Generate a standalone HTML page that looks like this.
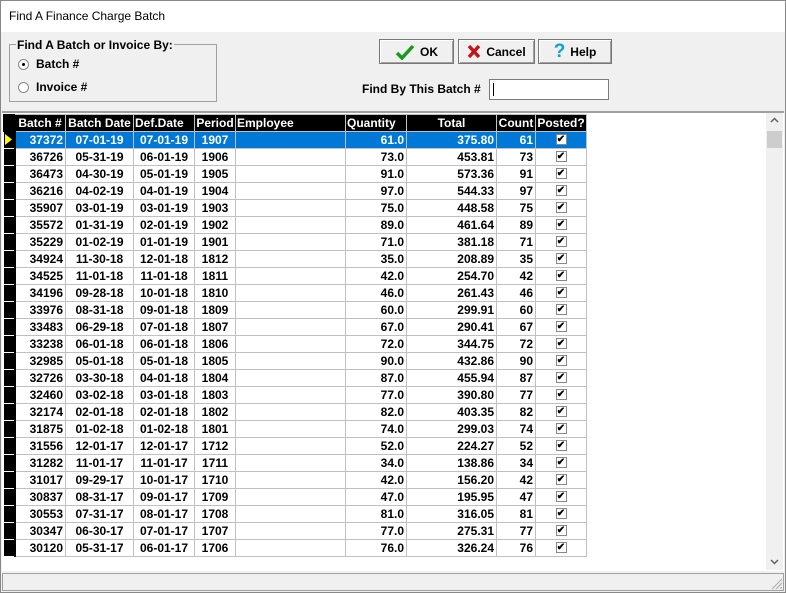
<!DOCTYPE html>
<html><head><meta charset="utf-8"><style>
*{margin:0;padding:0;box-sizing:border-box}
body{width:786px;height:593px;position:relative;overflow:hidden;background:#f0f0f0;font-family:"Liberation Sans",Arial,sans-serif;font-size:12px;font-weight:bold;color:#000}
.abs{position:absolute}
#title{left:0;top:0;width:786px;height:32px;background:#fff;font-weight:normal;font-size:12px;padding:9px 0 0 9px}
#frame{left:0;top:0;width:786px;height:593px;border:1px solid #888;pointer-events:none}
.grp{left:9px;top:44px;width:208px;height:58px;border:1px solid #a0a0a0}
.btn{top:39px;height:25px;border:1px solid #777;background:#f0f0f0;box-shadow:inset 1px 1px 0 #fff,inset -1px -1px 0 #a0a0a0;display:flex;align-items:center;justify-content:center;gap:5px}
.radio{width:11px;height:11px;border-radius:50%;border:1px solid #888;background:#fff;display:inline-block}
#grid{left:2px;top:111px;width:782px;height:460px;background:#fff;border-top:2px solid #a0a0a0}
table{position:absolute;left:1px;top:1px;border-collapse:collapse;table-layout:fixed;width:583px}
td{height:17px;border:1px solid #c0c0c0;padding:0 2px;white-space:nowrap;overflow:hidden;line-height:15px}
th{height:17px;background:#000;color:#fff;border:1px solid #c0c0c0;border-bottom:none;padding:0 1px;white-space:nowrap;overflow:hidden;font-weight:bold;line-height:15px}
td.i{background:#000;border:none;border-bottom:1px solid #fff;border-right:2px solid #000;padding:0 1px}
.r{text-align:right}.c{text-align:center}
tr.sel td{background:#0078d7;color:#fff}
tr.sel td.i{background:#000}
.cb{display:inline-block;width:11px;height:11px;border:1px solid #888;background:#fff;vertical-align:middle;position:relative;top:-1px;font-size:10px;line-height:9px;color:#000;text-align:center}
#sb{left:766px;top:113px;width:17px;height:457px;background:#f0f0f0}
#status{left:2px;top:573px;width:782px;height:18px;border:1px solid #a0a0a0;background:#f0f0f0}
</style></head><body>
<div id="title" class="abs">Find A Finance Charge Batch</div>
<div class="abs grp"></div>
<div class="abs" style="left:16px;top:38px;background:#f0f0f0;padding:0 1px">Find A Batch or Invoice By:</div>
<div class="abs" style="left:18px;top:57px;display:flex;align-items:center;gap:7px"><span class="radio" style="position:relative"><span style="position:absolute;left:3px;top:3px;width:3px;height:3px;background:#000;border-radius:50%"></span></span>Batch #</div>
<div class="abs" style="left:18px;top:80px;display:flex;align-items:center;gap:7px"><span class="radio"></span>Invoice #</div>
<div class="abs btn" style="left:379px;width:75px"><svg width="20" height="16" viewBox="0 0 20 16"><path d="M2 9 L7 14 L18 2" stroke="#1a9a1a" stroke-width="3.5" fill="none"/></svg>OK</div>
<div class="abs btn" style="left:458px;width:77px"><svg width="14" height="15" viewBox="0 0 14 15"><path d="M2 2 L12 13 M12 2 L2 13" stroke="#c01818" stroke-width="3.5"/></svg>Cancel</div>
<div class="abs btn" style="left:538px;width:74px"><span style="color:#0fa0d0;font-size:19px;font-weight:bold;line-height:16px">?</span>Help</div>
<div class="abs" style="left:362px;top:82px">Find By This Batch #</div>
<div class="abs" style="left:489px;top:79px;width:120px;height:21px;background:#fff;border:1px solid #7a7a7a"><div style="position:absolute;left:3px;top:3px;width:1px;height:13px;background:#000"></div></div>
<div id="grid" class="abs">
<table>
<colgroup><col style="width:11px"><col style="width:51px"><col style="width:68px"><col style="width:61px"><col style="width:41px"><col style="width:110px"><col style="width:61px"><col style="width:90px"><col style="width:39px"><col style="width:51px"></colgroup>
<tr><th style="background:#000;border-color:#000"></th><th>Batch #</th><th>Batch Date</th><th style="text-align:left">Def.Date</th><th>Period</th><th style="text-align:left">Employee</th><th style="text-align:left">Quantity</th><th>Total</th><th>Count</th><th>Posted?</th></tr>
<tr class="sel"><td class="i"><svg width="7" height="11" style="display:block"><path d="M0 0 L7 5.5 L0 11Z" fill="#ff0"/></svg></td><td class="r">37372</td><td class="c">07-01-19</td><td class="c">07-01-19</td><td class="c">1907</td><td></td><td class="r">61.0</td><td class="r">375.80</td><td class="r">61</td><td class="c"><span class="cb">✔</span></td></tr>
<tr><td class="i"></td><td class="r">36726</td><td class="c">05-31-19</td><td class="c">06-01-19</td><td class="c">1906</td><td></td><td class="r">73.0</td><td class="r">453.81</td><td class="r">73</td><td class="c"><span class="cb">✔</span></td></tr>
<tr><td class="i"></td><td class="r">36473</td><td class="c">04-30-19</td><td class="c">05-01-19</td><td class="c">1905</td><td></td><td class="r">91.0</td><td class="r">573.36</td><td class="r">91</td><td class="c"><span class="cb">✔</span></td></tr>
<tr><td class="i"></td><td class="r">36216</td><td class="c">04-02-19</td><td class="c">04-01-19</td><td class="c">1904</td><td></td><td class="r">97.0</td><td class="r">544.33</td><td class="r">97</td><td class="c"><span class="cb">✔</span></td></tr>
<tr><td class="i"></td><td class="r">35907</td><td class="c">03-01-19</td><td class="c">03-01-19</td><td class="c">1903</td><td></td><td class="r">75.0</td><td class="r">448.58</td><td class="r">75</td><td class="c"><span class="cb">✔</span></td></tr>
<tr><td class="i"></td><td class="r">35572</td><td class="c">01-31-19</td><td class="c">02-01-19</td><td class="c">1902</td><td></td><td class="r">89.0</td><td class="r">461.64</td><td class="r">89</td><td class="c"><span class="cb">✔</span></td></tr>
<tr><td class="i"></td><td class="r">35229</td><td class="c">01-02-19</td><td class="c">01-01-19</td><td class="c">1901</td><td></td><td class="r">71.0</td><td class="r">381.18</td><td class="r">71</td><td class="c"><span class="cb">✔</span></td></tr>
<tr><td class="i"></td><td class="r">34924</td><td class="c">11-30-18</td><td class="c">12-01-18</td><td class="c">1812</td><td></td><td class="r">35.0</td><td class="r">208.89</td><td class="r">35</td><td class="c"><span class="cb">✔</span></td></tr>
<tr><td class="i"></td><td class="r">34525</td><td class="c">11-01-18</td><td class="c">11-01-18</td><td class="c">1811</td><td></td><td class="r">42.0</td><td class="r">254.70</td><td class="r">42</td><td class="c"><span class="cb">✔</span></td></tr>
<tr><td class="i"></td><td class="r">34196</td><td class="c">09-28-18</td><td class="c">10-01-18</td><td class="c">1810</td><td></td><td class="r">46.0</td><td class="r">261.43</td><td class="r">46</td><td class="c"><span class="cb">✔</span></td></tr>
<tr><td class="i"></td><td class="r">33976</td><td class="c">08-31-18</td><td class="c">09-01-18</td><td class="c">1809</td><td></td><td class="r">60.0</td><td class="r">299.91</td><td class="r">60</td><td class="c"><span class="cb">✔</span></td></tr>
<tr><td class="i"></td><td class="r">33483</td><td class="c">06-29-18</td><td class="c">07-01-18</td><td class="c">1807</td><td></td><td class="r">67.0</td><td class="r">290.41</td><td class="r">67</td><td class="c"><span class="cb">✔</span></td></tr>
<tr><td class="i"></td><td class="r">33238</td><td class="c">06-01-18</td><td class="c">06-01-18</td><td class="c">1806</td><td></td><td class="r">72.0</td><td class="r">344.75</td><td class="r">72</td><td class="c"><span class="cb">✔</span></td></tr>
<tr><td class="i"></td><td class="r">32985</td><td class="c">05-01-18</td><td class="c">05-01-18</td><td class="c">1805</td><td></td><td class="r">90.0</td><td class="r">432.86</td><td class="r">90</td><td class="c"><span class="cb">✔</span></td></tr>
<tr><td class="i"></td><td class="r">32726</td><td class="c">03-30-18</td><td class="c">04-01-18</td><td class="c">1804</td><td></td><td class="r">87.0</td><td class="r">455.94</td><td class="r">87</td><td class="c"><span class="cb">✔</span></td></tr>
<tr><td class="i"></td><td class="r">32460</td><td class="c">03-02-18</td><td class="c">03-01-18</td><td class="c">1803</td><td></td><td class="r">77.0</td><td class="r">390.80</td><td class="r">77</td><td class="c"><span class="cb">✔</span></td></tr>
<tr><td class="i"></td><td class="r">32174</td><td class="c">02-01-18</td><td class="c">02-01-18</td><td class="c">1802</td><td></td><td class="r">82.0</td><td class="r">403.35</td><td class="r">82</td><td class="c"><span class="cb">✔</span></td></tr>
<tr><td class="i"></td><td class="r">31875</td><td class="c">01-02-18</td><td class="c">01-02-18</td><td class="c">1801</td><td></td><td class="r">74.0</td><td class="r">299.03</td><td class="r">74</td><td class="c"><span class="cb">✔</span></td></tr>
<tr><td class="i"></td><td class="r">31556</td><td class="c">12-01-17</td><td class="c">12-01-17</td><td class="c">1712</td><td></td><td class="r">52.0</td><td class="r">224.27</td><td class="r">52</td><td class="c"><span class="cb">✔</span></td></tr>
<tr><td class="i"></td><td class="r">31282</td><td class="c">11-01-17</td><td class="c">11-01-17</td><td class="c">1711</td><td></td><td class="r">34.0</td><td class="r">138.86</td><td class="r">34</td><td class="c"><span class="cb">✔</span></td></tr>
<tr><td class="i"></td><td class="r">31017</td><td class="c">09-29-17</td><td class="c">10-01-17</td><td class="c">1710</td><td></td><td class="r">42.0</td><td class="r">156.20</td><td class="r">42</td><td class="c"><span class="cb">✔</span></td></tr>
<tr><td class="i"></td><td class="r">30837</td><td class="c">08-31-17</td><td class="c">09-01-17</td><td class="c">1709</td><td></td><td class="r">47.0</td><td class="r">195.95</td><td class="r">47</td><td class="c"><span class="cb">✔</span></td></tr>
<tr><td class="i"></td><td class="r">30553</td><td class="c">07-31-17</td><td class="c">08-01-17</td><td class="c">1708</td><td></td><td class="r">81.0</td><td class="r">316.05</td><td class="r">81</td><td class="c"><span class="cb">✔</span></td></tr>
<tr><td class="i"></td><td class="r">30347</td><td class="c">06-30-17</td><td class="c">07-01-17</td><td class="c">1707</td><td></td><td class="r">77.0</td><td class="r">275.31</td><td class="r">77</td><td class="c"><span class="cb">✔</span></td></tr>
<tr><td class="i"></td><td class="r">30120</td><td class="c">05-31-17</td><td class="c">06-01-17</td><td class="c">1706</td><td></td><td class="r">76.0</td><td class="r">326.24</td><td class="r">76</td><td class="c"><span class="cb">✔</span></td></tr>
</table>
</div>
<div id="sb" class="abs">
<svg class="abs" style="left:4px;top:4px" width="9" height="6"><path d="M1 5 L4.5 1.5 L8 5" stroke="#606060" stroke-width="1.5" fill="none"/></svg>
<div class="abs" style="left:1px;top:18px;width:15px;height:17px;background:#cdcdcd"></div>
<svg class="abs" style="left:4px;top:446px" width="9" height="6"><path d="M1 1 L4.5 4.5 L8 1" stroke="#606060" stroke-width="1.5" fill="none"/></svg>
</div>
<div id="status" class="abs"></div>
<svg class="abs" style="left:771px;top:578px" width="12" height="12"><path d="M11 1 L1 11 M11 5 L5 11 M11 9 L9 11" stroke="#aaa" stroke-width="1"/></svg>
<div id="frame" class="abs"></div>
</body></html>
